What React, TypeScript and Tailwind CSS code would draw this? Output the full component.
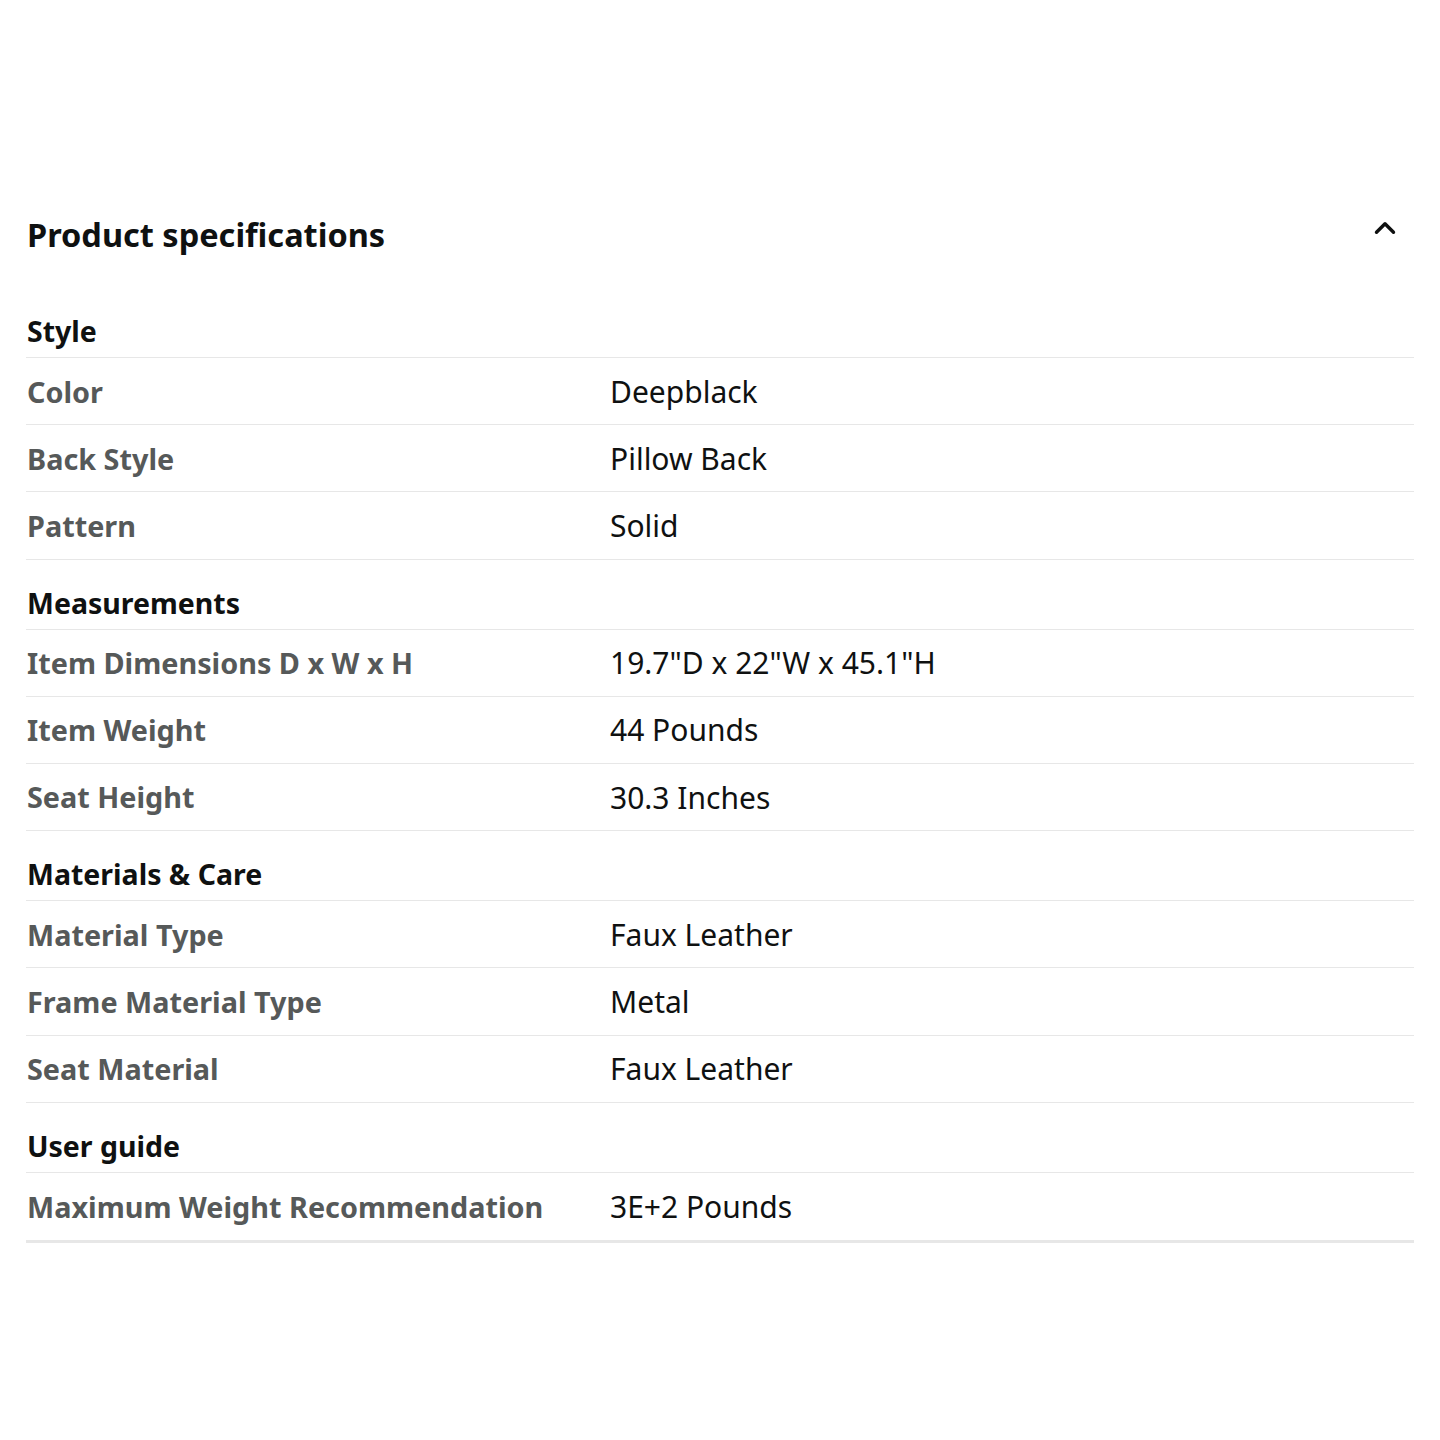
import { ChevronUp } from 'lucide-react';

type Row = { label: string; value: string };
type Section = { title: string; rows: Row[] };

const sections: Section[] = [
  {
    title: 'Style',
    rows: [
      { label: 'Color', value: 'Deepblack' },
      { label: 'Back Style', value: 'Pillow Back' },
      { label: 'Pattern', value: 'Solid' },
    ],
  },
  {
    title: 'Measurements',
    rows: [
      { label: 'Item Dimensions D x W x H', value: '19.7"D x 22"W x 45.1"H' },
      { label: 'Item Weight', value: '44 Pounds' },
      { label: 'Seat Height', value: '30.3 Inches' },
    ],
  },
  {
    title: 'Materials & Care',
    rows: [
      { label: 'Material Type', value: 'Faux Leather' },
      { label: 'Frame Material Type', value: 'Metal' },
      { label: 'Seat Material', value: 'Faux Leather' },
    ],
  },
  {
    title: 'User guide',
    rows: [{ label: 'Maximum Weight Recommendation', value: '3E+2 Pounds' }],
  },
];

export default function App() {
  return (
    <div
      className="w-[1440px] h-[1440px] bg-white pt-[208px] pl-[26px] pr-[26px] text-[#0f1111]"
      style={{ fontFamily: '"Noto Sans", "Open Sans", Arial, sans-serif' }}
    >
      <div className="flex items-start justify-between h-[54px]">
        <h2 className="text-[32.5px] leading-[54px] font-bold pl-[1px]">Product specifications</h2>
        <ChevronUp className="w-[34px] h-[34px] mt-[3px] mr-[12px] text-[#0f1111]" strokeWidth={2.4} />
      </div>

      <div className="mt-[52px] border-b-[3px] border-[#e7e7e7]">
        {sections.map((s, si) => (
          <div key={s.title}>
            <div
              className={`pl-[1px] text-[28.5px] font-bold leading-[34px] pb-[9px] border-b border-[#e7e7e7] ${
                si === 0 ? 'pt-[0px]' : 'pt-[26px]'
              }`}
            >
              {s.title}
            </div>
            {s.rows.map((r, ri) => (
              <div
                key={r.label}
                className={`flex items-center h-[67.2px] ${
                  ri < s.rows.length - 1 || si < sections.length - 1 ? 'border-b border-[#e7e7e7]' : ''
                }`}
              >
                <div className="w-[584px] pl-[1px] text-[28.8px] font-bold text-[#565959]">{r.label}</div>
                <div className="text-[30px] text-[#0f1111]">{r.value}</div>
              </div>
            ))}
          </div>
        ))}
      </div>
    </div>
  );
}
